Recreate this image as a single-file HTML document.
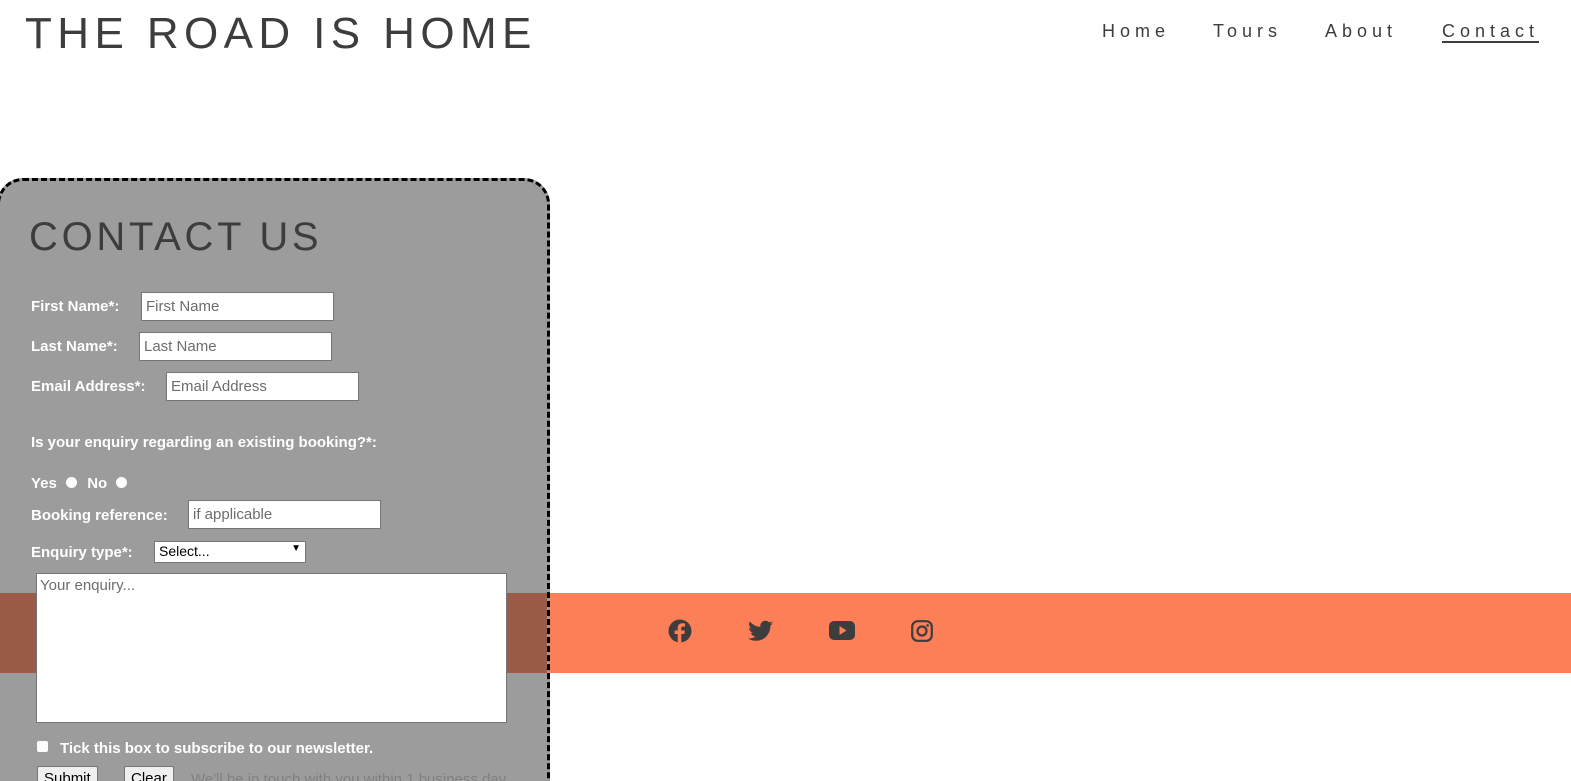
<!DOCTYPE html>
<html style="width:1571px;height:781px;overflow:hidden"><head><style>
*{box-sizing:border-box;margin:0;padding:0}
body{width:1571px;height:781px;overflow:hidden;background:#fff;font-family:"Liberation Sans",sans-serif;position:relative;color:#3d3d3d}
.abs{position:absolute}
.logo{left:25px;top:9px;font-size:44px;letter-spacing:5.4px;color:#3d3d3d;white-space:nowrap}
.nav{top:21px;font-size:18px;letter-spacing:5px;color:#3d3d3d}
.footer{left:0;top:593px;width:1571px;height:80px;background:#fd7f57}
.form{left:-3px;top:178px;width:553px;height:640px;border:3px dashed #000;border-radius:26px;background:#9c9c9c;overflow:hidden}
.band{left:0;top:412px;width:560px;height:80px;background:#9a5c48}
.lbl{color:#fff;font-weight:bold;font-size:15px;white-space:nowrap}
.inp{background:#fff;border:1px solid #767676;font-size:15px;color:#6d6d6d;padding:5px 4px;height:29px;white-space:nowrap}
.radio{width:11px;height:11px;border-radius:50%;background:#fff;display:inline-block}
.btn{background:#efefef;border:1px solid #767676;border-radius:2px;font-size:15px;color:#000;padding:3px 6px;height:24px}
</style></head><body>
<div class="abs logo">THE ROAD IS HOME</div>
<div class="abs nav" style="left:1102px">Home</div>
<div class="abs nav" style="left:1213px">Tours</div>
<div class="abs nav" style="left:1325px">About</div>
<div class="abs nav" style="left:1442px;border-bottom:2px solid #3d3d3d;line-height:20px">Contact</div>

<div class="abs footer"></div>
<svg class="abs" style="left:668px;top:619px" width="24" height="24" viewBox="0 0 24 24"><circle cx="12" cy="12" r="11.5" fill="#3d3d3d"/><path d="M13.3 24V15h3l.5-3.5h-3.5V9.3c0-1 .3-1.7 1.8-1.7h1.9V4.5c-.3 0-1.5-.2-2.8-.2-2.700 0-4.500 1.700-4.500 4.700v2.5H6.6V15h3.1v9z" fill="#fd7f57"/></svg>
<svg class="abs" style="left:748px;top:620px" width="25" height="22" viewBox="0 0 24 20"><path d="M24 2.4c-.9.4-1.8.6-2.8.8 1-.6 1.8-1.6 2.2-2.7-1 .6-2 1-3.1 1.2A4.9 4.9 0 0 0 11.9 6 14 14 0 0 1 1.7.9a4.9 4.9 0 0 0 1.5 6.6c-.8 0-1.6-.3-2.2-.6 0 2.4 1.7 4.4 3.9 4.8-.7.2-1.5.2-2.2.1.6 2 2.4 3.4 4.6 3.4A9.9 9.9 0 0 1 0 17.2 14 14 0 0 0 7.5 19.4c9.1 0 14-7.5 14-14v-.6c1-.7 1.8-1.6 2.5-2.4z" fill="#3d3d3d"/></svg>
<svg class="abs" style="left:829px;top:620px" width="26" height="22" viewBox="0 0 26 22"><rect x="0" y="1" width="26" height="19" rx="5" fill="#3d3d3d"/><path d="M10.5 6v9l7-4.5z" fill="#fd7f57"/></svg>
<svg class="abs" style="left:911px;top:620px" width="22" height="22" viewBox="0 0 22 22"><rect x="1.2" y="1.2" width="19.6" height="19.6" rx="5.5" fill="none" stroke="#3d3d3d" stroke-width="2.2"/><circle cx="11" cy="11" r="4.5" fill="none" stroke="#3d3d3d" stroke-width="2.2"/><circle cx="16.6" cy="5.4" r="1.3" fill="#3d3d3d"/></svg>

<div class="abs form">
  <div class="abs band"></div>
  <div class="abs" style="left:29px;top:34px;font-size:40px;letter-spacing:3.7px;color:#3d3d3d;white-space:nowrap">CONTACT US</div>
  <div class="abs lbl" style="left:31px;top:117px">First Name*:</div>
  <div class="abs inp" style="left:141px;top:111px;width:193px">First Name</div>
  <div class="abs lbl" style="left:31px;top:157px">Last Name*:</div>
  <div class="abs inp" style="left:139px;top:151px;width:193px">Last Name</div>
  <div class="abs lbl" style="left:31px;top:197px">Email Address*:</div>
  <div class="abs inp" style="left:166px;top:191px;width:193px">Email Address</div>
  <div class="abs lbl" style="left:31px;top:253px">Is your enquiry regarding an existing booking?*:</div>
  <div class="abs lbl" style="left:31px;top:294px">Yes <span class="radio" style="margin:0 6px 0 5px"></span> No <span class="radio" style="margin-left:5px"></span></div>
  <div class="abs lbl" style="left:31px;top:326px">Booking reference:</div>
  <div class="abs inp" style="left:188px;top:319px;width:193px">if applicable</div>
  <div class="abs lbl" style="left:31px;top:363px">Enquiry type*:</div>
  <div class="abs inp" style="left:154px;top:360px;width:152px;height:22px;padding:1px 4px;color:#000;font-size:14px">Select...<span style="position:absolute;right:4px;top:1px;font-size:10px">&#9660;</span></div>
  <div class="abs inp" style="left:36px;top:392px;width:471px;height:150px;padding:4px 3px;line-height:16px">Your enquiry...</div>
  <div class="abs" style="left:37px;top:560px;width:11px;height:11px;background:#fff;border-radius:2px"></div>
  <div class="abs lbl" style="left:60px;top:559px">Tick this box to subscribe to our newsletter.</div>
  <div class="abs btn" style="left:37px;top:585px">Submit</div>
  <div class="abs btn" style="left:124px;top:585px">Clear</div>
  <div class="abs" style="left:191px;top:590px;font-size:15px;color:#808080;white-space:nowrap">We'll be in touch with you within 1 business day.</div>
</div>
</body></html>
